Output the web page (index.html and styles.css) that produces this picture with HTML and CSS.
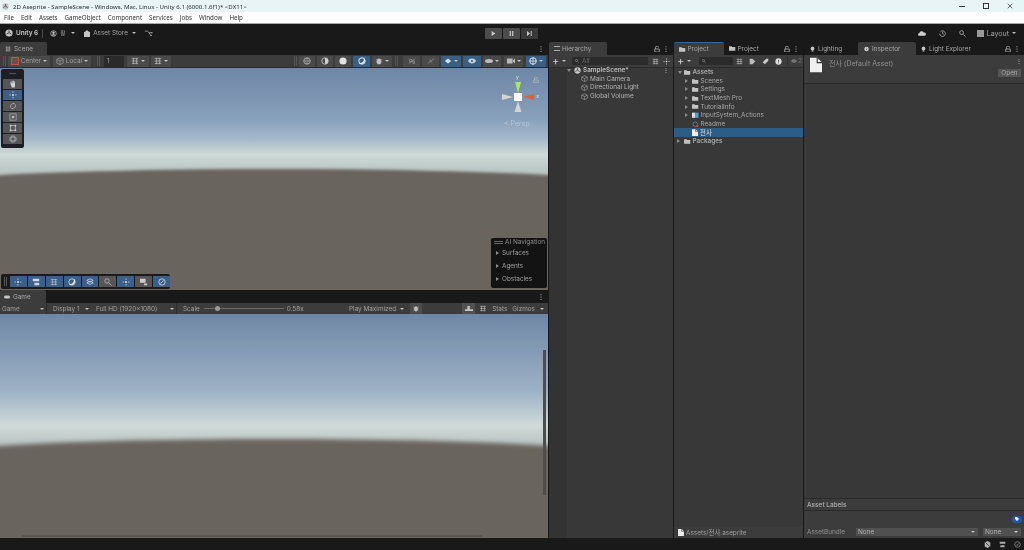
FILE: index.html
```html
<!DOCTYPE html>
<html lang="en">
<head>
<meta charset="utf-8">
<title>2D Aseprite - SampleScene - Unity 6.1</title>
<link rel="stylesheet" href="styles.css">
</head>
<body>
<svg class="defs" width="0" height="0">
  <symbol id="folder" viewBox="0 0 10 8"><path d="M0 1h4l1 1h5v6H0z" fill="#c2c2c2"/></symbol>
  <symbol id="cube" viewBox="0 0 10 10"><path d="M5 1l4 2v4.500L5 9.500 1 7.500V3zM1 3l4 2 4-2M5 5v4.500" fill="none" stroke="#a8a8a8" stroke-width=".8"/></symbol>
  <symbol id="file" viewBox="0 0 10 12"><path d="M0 0h6l4 4v8H0z" fill="#eee"/><path d="M6 0v4h4" fill="none" stroke="#333" stroke-width=".9"/></symbol>
  <symbol id="lock" viewBox="0 0 8 8"><path d="M1 4h6v4H1zM2 4V2a2 2 0 0 1 4 0" fill="none" stroke="#bbb" stroke-width="1"/></symbol>
  <symbol id="dots" viewBox="0 0 2 8"><circle cx="1" cy="1" r=".8" fill="#bbb"/><circle cx="1" cy="4" r=".8" fill="#bbb"/><circle cx="1" cy="7" r=".8" fill="#bbb"/></symbol>
  <symbol id="logo" viewBox="0 0 10 10"><circle cx="5" cy="5" r="4.500" fill="#c4c4c4"/><path d="M5 1.500v3L2 6.500M5 4.500l3 2" stroke="#222" stroke-width=".9" fill="none"/></symbol>
  <symbol id="move" viewBox="0 0 10 10"><path d="M5 .5v9M.5 5h9" stroke="#d8d8d8" stroke-width=".9" stroke-dasharray="2 1.500"/><circle cx="5" cy="5" r="1" fill="#eee"/></symbol>
  <symbol id="bulb" viewBox="0 0 8 9"><circle cx="4" cy="3.500" r="3" fill="#c4c4c4"/><rect x="2.500" y="6.500" width="3" height="2" fill="#c4c4c4"/></symbol>
  <symbol id="grid" viewBox="0 0 10 10"><path d="M1 2h8M1 5h8M1 8h8M3 1v8M7 1v8" stroke="#bbb" stroke-width=".9"/></symbol>
  <symbol id="bug" viewBox="0 0 8 10"><ellipse cx="4" cy="5.500" rx="2.800" ry="3.700" fill="#c0c0c0"/><path d="M0 3l2 1M8 3L6 4M0 6h2M8 6H6M1 9l1-1M7 9L6 8" stroke="#c0c0c0" stroke-width=".7"/></symbol>
  <symbol id="eye" viewBox="0 0 10 6"><path d="M0 3c2-4 8-4 10 0-2 4-8 4-10 0z" fill="#c8d2dc"/><circle cx="5" cy="3" r="1.300" fill="#33567a"/></symbol>
  <symbol id="search" viewBox="0 0 8 8"><circle cx="3" cy="3" r="2.200" fill="none" stroke="#aaa"/><path d="M5 5l2.500 2.500" stroke="#aaa"/></symbol>
</svg>

<div class="window">
  <div class="titlebar">
    <svg class="title-logo"><use href="#logo"/></svg>
    <span class="title-text">2D Aseprite - SampleScene - Windows, Mac, Linux - Unity 6.1 (6000.1.6f1)* &lt;DX11&gt;</span>
    <div class="win-controls">
      <span class="win-min"></span>
      <span class="win-max"></span>
      <svg class="win-close" viewBox="0 0 8 8"><path d="M1 1l6 6M7 1l-6 6" stroke="#222" stroke-width=".9"/></svg>
    </div>
  </div>
  <nav class="menubar">
    <span>File</span><span>Edit</span><span>Assets</span><span>GameObject</span><span>Component</span><span>Services</span><span>Jobs</span><span>Window</span><span>Help</span>
  </nav>

  <div class="maintoolbar">
    <div class="mt-left">
      <svg class="mt-logo"><use href="#logo"/></svg><b class="mt-unity">Unity 6</b><i class="mt-sep"></i>
      <svg class="mt-acct" viewBox="0 0 10 10"><circle cx="5" cy="5" r="4" fill="none" stroke="#c4c4c4"/><circle cx="5" cy="4" r="1.700" fill="#c4c4c4"/><path d="M2 8c1-2.500 5-2.500 6 0" fill="#c4c4c4"/></svg>
      <span class="mt-hangul">황</span><i class="caret"></i>
      <svg class="mt-bag" viewBox="0 0 8 9"><path d="M0 2.500h8V9H0zM2 2.500a2 2 0 0 1 4 0" fill="#c4c4c4" stroke="#c4c4c4" stroke-width=".5"/></svg>
      <span class="mt-store">Asset Store</span><i class="caret"></i>
      <svg class="mt-graph" viewBox="0 0 10 8"><path d="M0 1h3l2 2h3M5 3l2 3" stroke="#aaa" fill="none"/><circle cx="8.500" cy="3" r="1" fill="#aaa"/><circle cx="7.500" cy="6.500" r="1" fill="#aaa"/></svg>
    </div>
    <div class="playmode">
      <button class="pm"><svg viewBox="0 0 8 8"><path d="M1 0l6 4-6 4z" fill="#c8c8c8"/></svg></button>
      <button class="pm"><svg viewBox="0 0 8 8"><path d="M1 0h2v8H1zM5 0h2v8H5z" fill="#c8c8c8"/></svg></button>
      <button class="pm pm-dark"><svg viewBox="0 0 8 8"><path d="M0 0l5 4-5 4zM6 0h1.500v8H6z" fill="#c8c8c8"/></svg></button>
    </div>
    <div class="mt-right">
      <svg class="mt-cloud" viewBox="0 0 12 7"><path d="M2 7a2 2 0 0 1 0-4 3.500 3.500 0 0 1 6.500-1A2.500 2.500 0 0 1 10 7z" fill="#d0d0d0"/></svg>
      <svg class="mt-hist" viewBox="0 0 10 10"><path d="M2 2.500a4 4 0 1 1-1 2.500M5 2.500V5l2 1" stroke="#c0c0c0" fill="none"/></svg>
      <svg class="mt-search"><use href="#search"/></svg>
      <span class="mt-layout"><i class="layout-ico"></i>Layout<i class="caret"></i></span>
    </div>
  </div>

  <div class="workspace">
    <div class="col-left">
      <section class="scene-panel">
        <div class="tabbar">
          <div class="tab tab-scene"><svg class="tab-ico"><use href="#grid"/></svg>Scene</div>
          <svg class="tabdots"><use href="#dots"/></svg>
        </div>
        <div class="scene-tools">
          <i class="grip"></i>
          <button class="st w42"><i class="center-ico"></i>Center<i class="caret"></i></button>
          <button class="st w38"><svg class="st-ico"><use href="#cube"/></svg>Local<i class="caret"></i></button>
          <i class="grip g2"></i>
          <span class="field">1</span>
          <button class="st w22 ml3"><svg class="st-ico"><use href="#grid"/></svg><i class="caret"></i></button>
          <button class="st w20"><svg class="st-ico"><use href="#grid"/></svg><i class="caret"></i></button>
          <span class="flexspace"></span>
          <i class="grip"></i>
          <button class="st w16"><svg class="st-ico" viewBox="0 0 10 10"><circle cx="5" cy="5" r="4" fill="none" stroke="#bbb"/><path d="M1 5h8M5 1c-2 3-2 5 0 8M5 1c2 3 2 5 0 8" stroke="#bbb" fill="none" stroke-width=".6"/></svg></button>
          <button class="st w16"><svg class="st-ico" viewBox="0 0 10 10"><circle cx="5" cy="5" r="4" fill="none" stroke="#ccc"/><path d="M5 1a4 4 0 0 1 0 8z" fill="#ccc"/></svg></button>
          <button class="st w16"><svg class="st-ico" viewBox="0 0 10 10"><circle cx="5" cy="5" r="4.500" fill="#e2e2e2"/></svg></button>
          <button class="st w17 on"><svg class="st-ico" viewBox="0 0 10 10"><circle cx="5" cy="5" r="4" fill="none" stroke="#eee" stroke-width="1.200"/><path d="M2 8a5 5 0 0 0 6-6" stroke="#fff" fill="none" stroke-width="1.500"/></svg></button>
          <button class="st w20"><svg class="st-ico"><use href="#bug"/></svg><i class="caret"></i></button>
          <i class="grip g3"></i>
          <button class="st w17"><svg class="st-ico" viewBox="0 0 10 10"><path d="M1 8l8-6M2 3h3v3H2zM6 5h2v3H6z" stroke="#aaa" fill="none" stroke-width=".7"/></svg></button>
          <button class="st w17"><svg class="st-ico" viewBox="0 0 10 10"><path d="M1 8l8-6M3 3l3 4" stroke="#aaa" fill="none" stroke-width=".7"/></svg></button>
          <button class="st w20 on"><svg class="st-ico" viewBox="0 0 10 10"><path d="M1 5l4-3 4 3-4 3zM5 0v4" fill="#d6dee6"/></svg><i class="caret"></i></button>
          <button class="st w18 on"><svg class="st-ico"><use href="#eye"/></svg></button>
          <button class="st w18"><svg class="st-ico" viewBox="0 0 10 6"><ellipse cx="5" cy="3" rx="5" ry="2.500" fill="#bbb"/></svg><i class="caret"></i></button>
          <button class="st w19 ml3"><svg class="st-ico" viewBox="0 0 10 6"><path d="M0 0h7v6H0zM7.500 2l2.500-2v6L7.500 4z" fill="#bbb"/></svg><i class="caret"></i></button>
          <button class="st w20 on ml3"><svg class="st-ico" viewBox="0 0 10 10"><circle cx="5" cy="5" r="4" fill="none" stroke="#e4e4e4" stroke-width="1.200"/><path d="M0 5h10M5 0v10" stroke="#e4e4e4"/></svg><i class="caret"></i></button>
        </div>
        <div class="sceneview">
          <div class="tools-overlay">
            <i class="ov-handle"></i>
            <button class="tool"><svg viewBox="0 0 10 10"><path d="M2 5V2h1v2h.5V1h1v3H5V1h1v3h.5V2h1v5L7 9.500H3.500z" fill="#d4d4d4"/></svg></button>
            <button class="tool tool-on"><svg><use href="#move"/></svg></button>
            <button class="tool"><svg viewBox="0 0 10 10"><path d="M2 7a4 4 0 0 1 5-5M8 3a4 4 0 0 1-5 5" stroke="#bbb" fill="none"/></svg></button>
            <button class="tool"><svg viewBox="0 0 10 10"><path d="M1 1h8v8H1z" fill="none" stroke="#bbb" stroke-width=".8"/><path d="M3.500 3.500h3v3h-3z" fill="#bbb"/></svg></button>
            <button class="tool"><svg viewBox="0 0 10 10"><path d="M2 2h6v6H2z" fill="none" stroke="#ccc" stroke-width=".8"/><path d="M1 1h2v2H1zM7 1h2v2H7zM1 7h2v2H1zM7 7h2v2H7z" fill="#ccc"/></svg></button>
            <button class="tool"><svg viewBox="0 0 10 10"><circle cx="5" cy="5" r="3.500" fill="none" stroke="#aaa" stroke-width=".7"/><path d="M1 3h8v4H1zM3 1v8h4V1z" fill="none" stroke="#aaa" stroke-width=".7"/></svg></button>
          </div>
          <div class="gizmo">
            <svg viewBox="0 0 38 38" class="gizmo-svg">
              <path d="M19 15L16 4h6z" fill="#a6ec52"/>
              <path d="M24 19l11-3v6z" fill="#e25a48"/>
              <path d="M14 19L3 16v6z" fill="#d4d4d0"/>
              <path d="M19 23l-3.500 11h7z" fill="#d4d4d0"/>
              <rect x="15" y="15" width="8" height="8" fill="#fff"/>
            </svg>
            <span class="gz-y">y</span><span class="gz-x">x</span>
            <svg class="gz-lock"><use href="#lock"/></svg>
            <span class="persp">&lt; Persp</span>
          </div>
          <div class="ai-nav">
            <div class="ai-title"><i class="ai-grip"></i>AI Navigation</div>
            <div class="ai-row"><i class="tri"></i>Surfaces</div>
            <div class="ai-row"><i class="tri"></i>Agents</div>
            <div class="ai-row"><i class="tri"></i>Obstacles</div>
          </div>
          <div class="bottom-overlay">
            <i class="bo-grip"></i>
            <button class="bo on"><svg><use href="#move"/></svg></button>
            <button class="bo on"><svg viewBox="0 0 10 10"><path d="M1 1h8v3H1zM3 6h6v3H3z" fill="#d0d8e0"/></svg></button>
            <button class="bo on"><svg><use href="#grid"/></svg></button>
            <button class="bo on"><svg viewBox="0 0 10 10"><circle cx="5" cy="5" r="4" fill="none" stroke="#ddd"/><path d="M2 8a5 5 0 0 0 6-6" stroke="#fff" fill="none" stroke-width="1.500"/></svg></button>
            <button class="bo on"><svg viewBox="0 0 10 10"><path d="M1 3l4-2 4 2-4 2zM1 6l4-2 4 2-4 2z" fill="none" stroke="#d0d8e0"/></svg></button>
            <button class="bo"><svg><use href="#search"/></svg></button>
            <button class="bo on"><svg><use href="#move"/></svg></button>
            <button class="bo"><svg viewBox="0 0 10 10"><path d="M0 1h7v5H0zM5 7h4v2H5z" fill="#ccc"/></svg></button>
            <button class="bo on"><svg viewBox="0 0 10 10"><circle cx="5" cy="5" r="4" fill="none" stroke="#ddd"/><path d="M3 7l4-4" stroke="#ddd"/></svg></button>
          </div>
        </div>
      </section>

      <section class="game-panel">
        <div class="tabbar game-tabbar">
          <div class="tab tab-game"><svg class="tab-ico" viewBox="0 0 10 6"><rect y=".5" width="10" height="5" rx="2.500" fill="#c4c4c4"/></svg>Game</div>
          <svg class="tabdots"><use href="#dots"/></svg>
        </div>
        <div class="game-tools">
          <span class="gt gt-game">Game<i class="caret"></i></span>
          <span class="gt gt-display">Display 1<i class="caret"></i></span>
          <span class="gt gt-res">Full HD (1920x1080)<i class="caret"></i></span>
          <span class="gt gt-scale">Scale<i class="slider"><i class="thumb"></i></i>0.58x</span>
          <span class="gt gt-play">Play Maximized<i class="caret"></i></span>
          <button class="gt-bug"><svg><use href="#bug"/></svg></button>
          <span class="flexspace"></span>
          <button class="gt-btn gt-sel"><svg viewBox="0 0 10 8"><path d="M0 5h10v2H0zM3 1h3v4H3z" fill="#c4c4c4"/></svg></button>
          <button class="gt-btn"><svg><use href="#grid"/></svg></button>
          <span class="gt-text gt-stats">Stats</span>
          <span class="gt-text">Gizmos</span>
          <span class="gt-drop"><i class="caret"></i></span>
        </div>
        <div class="gameview">
          <i class="vscroll"></i>
          <i class="hscroll"></i>
        </div>
      </section>
    </div>

    <section class="hierarchy">
      <div class="tabbar">
        <div class="tab tab-hier"><i class="list-ico"></i>Hierarchy</div>
        <span class="flexspace"></span>
        <svg class="tablock"><use href="#lock"/></svg>
        <svg class="tabdots"><use href="#dots"/></svg>
      </div>
      <div class="ptools">
        <span class="plus">+</span><i class="caret"></i>
        <span class="searchbox"><svg class="sb-ico"><use href="#search"/></svg>All</span>
        <svg class="ptool-ico"><use href="#grid"/></svg>
        <svg class="ptool-ico"><use href="#move"/></svg>
      </div>
      <div class="hier-body">
        <div class="hier-gutter"></div>
        <div class="hier-list">
          <div class="hrow hrow-scene"><i class="tri-down"></i><svg class="unity-ico"><use href="#logo"/></svg><b>SampleScene*</b><svg class="rowdots"><use href="#dots"/></svg></div>
          <div class="hrow hrow-child"><svg class="cube-ico"><use href="#cube"/></svg>Main Camera</div>
          <div class="hrow hrow-child"><svg class="cube-ico"><use href="#cube"/></svg>Directional Light</div>
          <div class="hrow hrow-child"><svg class="cube-ico"><use href="#cube"/></svg>Global Volume</div>
        </div>
      </div>
    </section>

    <section class="project">
      <div class="tabbar">
        <div class="tab tab-proj"><svg class="folder-ico"><use href="#folder"/></svg>Project</div>
        <div class="tab-plain"><svg class="folder-ico"><use href="#folder"/></svg>Project</div>
        <span class="flexspace"></span>
        <svg class="tablock"><use href="#lock"/></svg>
        <svg class="tabdots"><use href="#dots"/></svg>
      </div>
      <div class="ptools ptools-proj">
        <span class="plus">+</span><i class="caret"></i>
        <span class="searchbox sb-short"><svg class="sb-ico"><use href="#search"/></svg></span>
        <svg class="ptool-ico"><use href="#grid"/></svg>
        <svg class="ptool-ico" viewBox="0 0 10 10"><path d="M1 1h4l4 4-4 4H1z" fill="#bbb"/></svg>
        <svg class="ptool-ico" viewBox="0 0 10 10"><path d="M1 6l5-5h3v3L4 9z" fill="#ccc"/></svg>
        <svg class="ptool-ico" viewBox="0 0 10 10"><circle cx="5" cy="5" r="4.500" fill="#ddd"/><path d="M5 2.500v3M5 6.500v1.200" stroke="#333"/></svg>
        <span class="vis-count"><svg viewBox="0 0 10 6"><path d="M0 3c2-4 8-4 10 0-2 4-8 4-10 0z" fill="#777"/></svg>22</span>
      </div>
      <div class="tree">
        <div class="trow root"><i class="tri-down"></i><svg class="folder-ico"><use href="#folder"/></svg><b>Assets</b></div>
        <div class="trow l1"><i class="tri"></i><svg class="folder-ico"><use href="#folder"/></svg>Scenes</div>
        <div class="trow l1"><i class="tri"></i><svg class="folder-ico"><use href="#folder"/></svg>Settings</div>
        <div class="trow l1"><i class="tri"></i><svg class="folder-ico"><use href="#folder"/></svg>TextMesh Pro</div>
        <div class="trow l1"><i class="tri"></i><svg class="folder-ico"><use href="#folder"/></svg>TutorialInfo</div>
        <div class="trow l1"><i class="tri"></i><svg class="folder-ico" viewBox="0 0 10 8"><path d="M0 0h5v8H0z" fill="#ddd"/><path d="M5 0h5v8H5z" fill="#4f9fd8"/></svg>InputSystem_Actions</div>
        <div class="trow l1 noarrow"><svg class="folder-ico" viewBox="0 0 10 10"><circle cx="5" cy="5" r="3.500" fill="none" stroke="#5b8fa8" stroke-width="1.200"/><circle cx="8" cy="8" r="2" fill="#c0483a"/></svg>Readme</div>
        <div class="trow l1 noarrow sel"><svg class="folder-ico file-ico"><use href="#file"/></svg>전사</div>
        <div class="trow root"><i class="tri"></i><svg class="folder-ico"><use href="#folder"/></svg><b>Packages</b></div>
      </div>
      <div class="pathbar"><svg class="path-ico"><use href="#file"/></svg>Assets/전사.aseprite</div>
    </section>

    <section class="inspector">
      <div class="tabbar">
        <div class="tab-plain tab-light"><svg class="bulb"><use href="#bulb"/></svg>Lighting</div>
        <div class="tab tab-insp"><svg class="bulb" viewBox="0 0 8 8"><circle cx="4" cy="4" r="3.500" fill="#d0d0d0"/><path d="M4 2v.8M4 3.500v2.500" stroke="#333"/></svg>Inspector</div>
        <div class="tab-plain"><svg class="bulb"><use href="#bulb"/></svg>Light Explorer</div>
        <span class="flexspace"></span>
        <svg class="tablock"><use href="#lock"/></svg>
        <svg class="tabdots"><use href="#dots"/></svg>
      </div>
      <div class="insp-head">
        <svg class="insp-file"><use href="#file"/></svg>
        <span class="insp-title">전사 (Default Asset)</span>
        <div class="insp-actions">
          <svg class="rowdots"><use href="#dots"/></svg>
          <button class="open-btn">Open</button>
        </div>
      </div>
      <div class="insp-body"></div>
      <div class="labels-head">Asset Labels</div>
      <div class="labels-body">
        <div class="tag-row"><span class="tag-pill"><svg viewBox="0 0 8 8"><path d="M0 0h4l4 4-4 4-4-4z" fill="#eef"/></svg></span></div>
        <div class="bundle-row">
          <span class="bundle-label">AssetBundle</span>
          <span class="select sel-wide">None<i class="caret"></i></span>
          <span class="select sel-narrow">None<i class="caret"></i></span>
        </div>
      </div>
    </section>
  </div>

  <footer class="statusbar">
    <svg class="sb-right" viewBox="0 0 10 10"><path d="M5 0l4 2v6l-4 2-4-2V2z" fill="#b0b0b0"/><path d="M2 2l6 6" stroke="#222"/></svg>
    <svg class="sb-right" viewBox="0 0 10 10"><path d="M1 1h8v3H1zM2 6h6v3H2z" fill="#b0b0b0"/></svg>
    <svg class="sb-right" viewBox="0 0 10 10"><circle cx="5" cy="5" r="4" fill="none" stroke="#999"/><path d="M3 5l1.500 1.500L7 3.500" stroke="#999" fill="none"/></svg>
  </footer>
</div>
</body>
</html>
```

FILE: styles.css
```css
* { box-sizing: border-box; }
html, body { margin: 0; padding: 0; height: 100%; overflow: hidden; }
body { background: #191919; font-family: Inter, "Noto Sans CJK KR", sans-serif; font-size: 6.4px; color: #b4b4b4; }
i { display: block; font-style: normal; }
b { font-weight: 600; }
button { border: 0; padding: 0; margin: 0; font: inherit; color: inherit; background: none; }
svg { display: block; flex: none; }
.defs { position: absolute; }
.flexspace { flex: 1; }

.window { display: flex; flex-direction: column; width: 1024px; height: 550px; filter: blur(.35px); }

.titlebar { height: 12px; background: #e8f4f6; display: flex; align-items: center; padding-left: 2px; color: #2a2a2a; font-family: "Noto Sans", "Noto Sans CJK KR", sans-serif; font-size: 6.1px; }
.title-logo { width: 7px; height: 7px; margin-right: 4px; }
.win-controls { margin-left: auto; display: flex; align-items: center; }
.win-min { width: 6px; height: 1px; background: #333; margin-right: 18px; }
.win-max { width: 6px; height: 6px; border: 1px solid #333; margin-right: 18px; }
.win-close { width: 6px; height: 6px; margin-right: 11px; }

.menubar { height: 12px; background: #fff; border-bottom: 1px solid #aaa; display: flex; align-items: center; padding-left: 4px; gap: 7px; color: #333; font-family: "Noto Sans", sans-serif; font-size: 6.2px; }

.maintoolbar { height: 18px; background: #191919; display: flex; align-items: center; position: relative; }
.mt-left { display: flex; align-items: center; padding-left: 5px; width: 485px; color: #a4a4a4; }
.mt-logo { width: 8px; height: 8px; margin-right: 3px; }
.mt-unity { color: #c8c8c8; font-size: 6.4px; }
.mt-sep { width: 1px; height: 9px; background: #4a4a4a; margin: 0 7px 0 4px; }
.mt-acct { width: 7px; height: 7px; margin-right: 3px; }
.mt-hangul { font-size: 5.5px; margin-right: 5px; width: 6px; }
.mt-bag { width: 6px; height: 7px; margin: 0 3px 0 9px; }
.mt-store { margin-right: 4px; }
.mt-graph { width: 8px; height: 7px; margin-left: 9px; }
.caret { width: 0; height: 0; border-left: 2px solid transparent; border-right: 2px solid transparent; border-top: 2px solid #c0c0c0; flex: none; }
.playmode { display: flex; gap: 1px; }
.pm { width: 17px; height: 11px; background: #4c4c4c; display: flex; align-items: center; justify-content: center; border-radius: 1px; }
.pm svg { width: 5px; height: 5px; }
.pm-dark { background: #3a3a3a; }
.mt-right { margin-left: auto; display: flex; align-items: center; padding-right: 8px; color: #a4a4a4; }
.mt-cloud { width: 8px; height: 5px; margin-right: 13px; }
.mt-hist { width: 7px; height: 7px; margin-right: 13px; }
.mt-search { width: 7px; height: 7px; margin-right: 11px; }
.mt-layout { display: flex; align-items: center; gap: 3px; font-size: 7px; }
.layout-ico { width: 7px; height: 7px; background: #999; }

.workspace { flex: 1; min-height: 0; display: flex; background: #191919; }
.col-left { width: 548px; display: flex; flex-direction: column; }
.scene-panel { height: 248px; display: flex; flex-direction: column; }
.game-panel { flex: 1; min-height: 0; display: flex; flex-direction: column; }

.tabbar { height: 13px; display: flex; align-items: center; background: #191919; flex: none; color: #a8a8a8; }
.tab { height: 13px; background: #3c3c3c; display: flex; align-items: center; border-radius: 2px 2px 0 0; }
.tab-ico { width: 6px; height: 6px; margin-right: 3px; }
.tab-scene { width: 47px; padding-left: 5px; }
.tab-game { width: 46px; padding-left: 4px; }
.tabdots { width: 2px; height: 6px; margin-left: auto; margin-right: 6px; }
.tablock { width: 6px; height: 6px; margin-right: 5px; }
.tablock + .tabdots { margin-left: 0; margin-right: 6px; }

.scene-tools { height: 13px; background: #3c3c3c; border-bottom: 1px solid #2a2a2a; display: flex; align-items: center; padding: 0 2px 0 3px; gap: 2px; flex: none; }
.grip { width: 3px; height: 10px; border-left: 1px solid #555; border-right: 1px solid #555; flex: none; }
.g2 { margin-left: 4px; margin-right: 1px; }
.g3 { margin-left: 1px; margin-right: 3px; }
.st { height: 11px; background: #4a4a4a; display: flex; align-items: center; justify-content: center; gap: 2px; color: #a0a0a0; flex: none; border-radius: 1px; }
.st.on { background: #3a5f85; }
.st-ico { width: 8px; height: 8px; }
.center-ico { width: 8px; height: 8px; border: 1px solid #c0553c; background: #6a5048; margin-right: 0; }
.w42 { width: 42px; } .w38 { width: 38px; margin-left: 1px; } .w22 { width: 22px; } .w20 { width: 20px; } .w19 { width: 19px; } .w18 { width: 18px; } .w17 { width: 17px; } .w16 { width: 16px; }
.ml3 { margin-left: 1px; }
.field { width: 20px; height: 11px; background: #2a2a2a; color: #aaa; display: flex; align-items: center; padding-left: 3px; margin-left: 1px; }

.sceneview { flex: 1; position: relative; overflow: hidden; background: linear-gradient(to bottom, #6f87a7 0%, #88a0bb 23%, #a5b9c9 32%, #cfdad8 39%, #c0ccc9 44%, #b8c4c2 48%, #b8c4c2 100%); }
.sceneview::before { content: ""; position: absolute; left: -100px; right: -100px; top: 101px; bottom: -20px; background: #6a645f; border-radius: 50% 50% 0 0 / 19px 19px 0 0; filter: blur(1.5px); }
.tools-overlay { position: absolute; left: 1px; top: 1px; width: 23px; height: 79px; background: #1c1f24; border-radius: 2px; padding: 1px 2px; display: flex; flex-direction: column; gap: 1px; }
.ov-handle { height: 8px; margin: 0 6px; position: relative; }
.ov-handle::after { content: ""; position: absolute; left: 0; right: 0; top: 3px; height: 1px; background: #555; }
.tool { width: 19px; height: 10px; background: #565656; display: flex; align-items: center; justify-content: center; }
.tool svg { width: 8px; height: 8px; }
.tool-on { background: #3f5f85; }

.gizmo { position: absolute; right: 11px; top: 7px; width: 38px; height: 58px; }
.gizmo-svg { position: absolute; left: 0; top: 3px; width: 38px; height: 38px; }
.gz-y { position: absolute; left: 17px; top: -1px; font-size: 5px; color: #dfe6d8; }
.gz-x { position: absolute; right: -2px; top: 18px; font-size: 5px; color: #e8e8e8; }
.gz-lock { position: absolute; right: -2px; top: 2px; width: 6px; height: 6px; }
.persp { position: absolute; left: 5px; top: 44px; color: #b9c8d8; font-size: 7px; white-space: nowrap; }

.ai-nav { position: absolute; right: 1px; bottom: 2px; width: 56px; height: 50px; background: #131313; border-radius: 2px; padding: 0 0 0 3px; color: #a0a0a0; display: flex; flex-direction: column; }
.ai-title { display: flex; align-items: center; height: 8px; color: #8c8c8c; }
.ai-grip { width: 9px; height: 3px; border-top: 1px solid #666; border-bottom: 1px solid #666; margin-right: 2px; }
.ai-row { display: flex; align-items: center; height: 13.300px; padding-left: 2px; }
.tri { width: 0; height: 0; border-top: 2px solid transparent; border-bottom: 2px solid transparent; border-left: 3px solid #8a8a8a; margin-right: 3px; flex: none; }
.tri-down { width: 0; height: 0; border-left: 2px solid transparent; border-right: 2px solid transparent; border-top: 3px solid #8a8a8a; margin-right: 2px; flex: none; }

.bottom-overlay { position: absolute; left: 1px; bottom: 1px; height: 15px; width: 169px; background: #1b1b1b; border-radius: 2px; display: flex; align-items: center; padding-left: 3px; gap: 1px; }
.bo-grip { width: 3px; height: 9px; border-left: 1px solid #555; border-right: 1px solid #555; margin-right: 2px; }
.bo { width: 17px; height: 11px; background: #565656; display: flex; align-items: center; justify-content: center; }
.bo svg { width: 8px; height: 8px; }
.bo.on { background: #3a5f88; }

.game-tools { height: 11px; background: #3c3c3c; display: flex; align-items: center; flex: none; color: #a0a0a0; padding-right: 3px; }
.gt { display: flex; align-items: center; height: 11px; flex: none; }
.gt .caret { margin-left: auto; }
.gt-game { width: 47px; padding: 0 2px; border-right: 1px solid #2c2c2c; }
.gt-display { width: 45px; padding: 0 3px 0 6px; }
.gt-res { width: 85px; padding: 0 2px 0 4px; border-right: 1px solid #2c2c2c; }
.gt-scale { width: 172px; padding-left: 6px; }
.gt-play { width: 57px; padding: 0 2px 0 0; }
.slider { width: 80px; height: 1px; background: #6a6a6a; margin: 0 3px 0 4px; position: relative; }
.thumb { position: absolute; left: 11px; top: -2px; width: 5px; height: 5px; border-radius: 50%; background: #9a9a9a; }
.gt-bug { width: 12px; height: 11px; background: #4c4c4c; display: flex; align-items: center; justify-content: center; margin-left: 4px; }
.gt-bug svg { width: 6px; height: 7px; }
.gt-btn { width: 13px; height: 11px; display: flex; align-items: center; justify-content: center; background: #3c3c3c; margin-right: 1px; }
.gt-btn svg { width: 8px; height: 7px; }
.gt-sel { background: #515151; }
.gt-text { padding: 0 2px; margin-right: 1px; }
.gt-stats { background: #3c3c3c; }
.gt-drop { width: 7px; display: flex; align-items: center; justify-content: center; }
.gameview { flex: 1; min-height: 0; position: relative; overflow: hidden; background: linear-gradient(to bottom, #6f87a7 0%, #9cb1c5 34%, #bccbd2 44%, #d0dbd9 50%, #bfcac8 56%, #b5c2c0 60%, #b5c2c0 100%); }
.gameview::before { content: ""; position: absolute; left: -100px; right: -100px; top: 125px; bottom: -20px; background: #6a645f; border-radius: 50% 50% 0 0 / 21px 21px 0 0; filter: blur(2px); }
.vscroll { position: absolute; right: 2px; top: 36px; width: 3px; height: 145px; background: #4d4d4d; }
.hscroll { position: absolute; left: 22px; bottom: 1px; width: 460px; height: 2px; background: #5b564f; }

.hierarchy { width: 124px; margin-left: 1px; background: #383838; display: flex; flex-direction: column; }
.project { width: 130px; background: #383838; display: flex; flex-direction: column; border-left: 1px solid #191919; }
.inspector { flex: 1; margin-left: 1px; background: #383838; display: flex; flex-direction: column; min-width: 0; }

.tab-hier { width: 58px; padding-left: 5px; }
.list-ico { width: 6px; height: 5px; border-top: 1px solid #aaa; border-bottom: 1px solid #aaa; margin-right: 2px; }
.ptools { height: 13px; flex: none; background: #3c3c3c; border-bottom: 1px solid #2c2c2c; display: flex; align-items: center; padding: 0 2px 0 3px; gap: 3px; color: #bbb; }
.plus { font-size: 11px; line-height: 1; color: #d0d0d0; width: 7px; }
.caret + .searchbox { margin-left: 3px; }
.searchbox { width: 76px; height: 8px; background: #2b2b2b; display: flex; align-items: center; color: #666; padding-left: 3px; gap: 3px; flex: none; border-radius: 1px; }
.ptools .sb-short { width: 34px; margin-left: 5px; margin-right: -3px; }
.sb-ico { width: 4px; height: 4px; }
.ptool-ico { width: 7px; height: 7px; margin-left: 1px; }
.ptools-proj { gap: 3px; overflow: hidden; white-space: nowrap; padding-right: 0; }
.ptools-proj .ptool-ico { margin-left: 3px; }
.vis-count { display: flex; align-items: center; gap: 1px; color: #6e6e6e; margin-left: 2px; border-left: 1px solid #2f2f2f; padding-left: 3px; }
.vis-count svg { width: 6px; height: 4px; }

.hier-body { flex: 1; display: flex; }
.hier-gutter { width: 18px; background: #333; }
.hier-list { flex: 1; margin-top: -2px; }
.hrow { height: 8.600px; display: flex; align-items: center; position: relative; }
.unity-ico { width: 7px; height: 7px; margin: 0 2px 0 1px; }
.hrow b { color: #bcbcbc; }
.rowdots { width: 2px; height: 5px; margin-left: auto; margin-right: 6px; }
.hrow-child { padding-left: 14px; }
.cube-ico { width: 7px; height: 7px; margin-right: 2px; }

.tab-proj { width: 50px; padding-left: 5px; border-top: 1px solid #2d6a9f; }
.tab-plain { height: 13px; display: flex; align-items: center; padding-left: 5px; color: #a8a8a8; }
.folder-ico { width: 6.500px; height: 6.500px; margin-right: 2px; }
.tree { flex: 1; }
.trow { height: 8.600px; display: flex; align-items: center; padding-left: 2px; color: #a8a8a8; }
.trow .tri { margin-right: 4px; }
.trow .tri-down { margin-right: 2px; margin-left: 1px; }
.root { padding-left: 3px; }
.l1 { padding-left: 11px; }
.noarrow { padding-left: 18px; }
.sel { background: #2c5d87; color: #e0e0e0; }
.file-ico { height: 7.500px; width: 6px; }
.pathbar { height: 11px; background: #3c3c3c; display: flex; align-items: center; padding-left: 4px; gap: 2px; flex: none; color: #a0a0a0; }
.path-ico { width: 6px; height: 7px; }

.tab-light { width: 54px; padding-left: 6px; }
.bulb { width: 5px; height: 6px; margin-right: 3px; }
.tab-insp { width: 58px; padding-left: 6px; }
.insp-head { height: 29px; flex: none; background: #3c3c3c; border-bottom: 1px solid #2a2a2a; display: flex; padding: 2px 0 0 6px; }
.insp-file { width: 12px; height: 16px; margin-right: 7px; }
.insp-title { color: #909090; padding-top: 1px; font-size: 7px; }
.insp-actions { margin-left: auto; display: flex; flex-direction: column; align-items: flex-end; gap: 5px; padding-top: 2px; padding-right: 3px; }
.insp-actions .rowdots { margin-right: 1px; }
.open-btn { width: 23px; height: 8px; background: #555; color: #a4a4a4; line-height: 8px; text-align: center; border-radius: 1px; }
.insp-body { flex: 1; }
.labels-head { height: 13px; flex: none; background: #3c3c3c; border-top: 1px solid #2a2a2a; border-bottom: 1px solid #2a2a2a; display: flex; align-items: center; padding-left: 3px; font-weight: 600; color: #a4a4a4; }
.labels-body { height: 27px; flex: none; background: #3c3c3c; display: flex; flex-direction: column; }
.tag-row { height: 16px; display: flex; justify-content: flex-end; align-items: center; padding: 0 2px 0 0; }
.tag-pill { width: 10px; height: 7px; border-radius: 4px; background: #1c5aa8; display: flex; align-items: center; justify-content: center; }
.tag-pill svg { width: 4px; height: 4px; }
.bundle-row { height: 9px; display: flex; align-items: center; padding-left: 3px; }
.bundle-label { width: 49px; color: #909090; }
.select { height: 8px; background: #505050; display: flex; align-items: center; padding: 0 3px 0 2px; color: #b4b4b4; }
.select .caret { margin-left: auto; }
.sel-wide { width: 122px; margin-right: 5px; }
.sel-narrow { width: 38px; }

.statusbar { height: 12px; flex: none; background: #191919; display: flex; align-items: center; justify-content: flex-end; padding-right: 3px; gap: 8px; }
.sb-right { width: 7px; height: 7px; }
```
